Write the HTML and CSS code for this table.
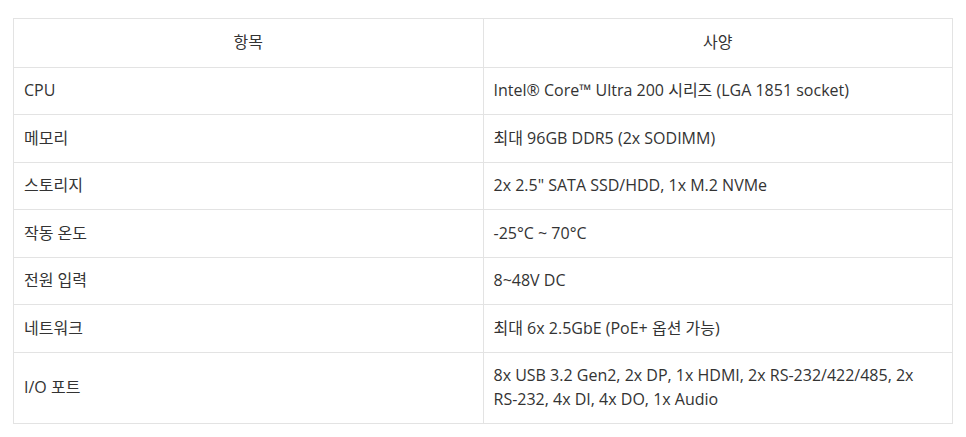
FILE: index.html
```html
<!DOCTYPE html>
<html lang="ko">
<head>
<meta charset="utf-8">
<link rel="stylesheet" href="styles.css">
</head>
<body>
<div class="page">
<table class="spec">
<thead>
<tr><th>항목</th><th>사양</th></tr>
</thead>
<tbody>
<tr><td>CPU</td><td>Intel® Core™ Ultra 200 시리즈 (LGA 1851 socket)</td></tr>
<tr><td>메모리</td><td>최대 96GB DDR5 (2x SODIMM)</td></tr>
<tr><td>스토리지</td><td>2x 2.5" SATA SSD/HDD, 1x M.2 NVMe</td></tr>
<tr><td>작동 온도</td><td>-25°C ~ 70°C</td></tr>
<tr><td>전원 입력</td><td>8~48V DC</td></tr>
<tr><td>네트워크</td><td>최대 6x 2.5GbE (PoE+ 옵션 가능)</td></tr>
<tr><td>I/O 포트</td><td>8x USB 3.2 Gen2, 2x DP, 1x HDMI, 2x <span class="nw">RS-232/422/485</span>, 2x <span class="nw">RS-232</span>, 4x DI, 4x DO, 1x Audio</td></tr>
</tbody>
</table>
</div>
</body>
</html>
```

FILE: styles.css
```css
html, body {
  margin: 0;
  padding: 0;
  background: #ffffff;
}
.page {
  padding: 18px 13px 13px 13px;
}
.spec {
  width: 940px;
  border-collapse: collapse;
  table-layout: fixed;
  font-family: "Open Sans", "Noto Sans CJK KR", sans-serif;
  font-size: 16px;
  line-height: 23.5px;
  color: #333333;
}
.spec th,
.spec td {
  border: 1px solid #e3e3e3;
  padding: 11.5px 10px;
  text-align: left;
  vertical-align: middle;
  font-weight: normal;
}
.spec th {
  text-align: center;
  padding: 12px 10px;
}
.nw {
  white-space: nowrap;
}
```
